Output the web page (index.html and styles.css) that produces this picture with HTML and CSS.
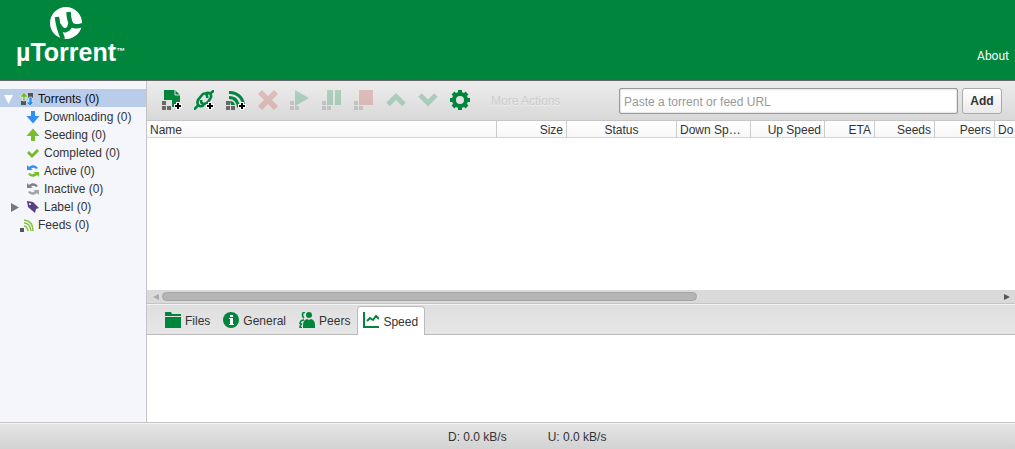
FILE: index.html
```html
<!DOCTYPE html>
<html lang="en">
<head>
<meta charset="utf-8">
<title>µTorrent</title>
<link rel="stylesheet" href="styles.css">
</head>
<body>
<svg class="defs" aria-hidden="true">
  <symbol id="grid" viewBox="0 0 9 9"><path d="M0 0h4v4H0zM0 5h4v4H0zM5 5h4v4H5z" fill="#686868"/></symbol>
  <symbol id="plus" viewBox="0 0 8 8"><path d="M2 0h4v2h2v4H6v2H2V6H0V2h2z" fill="#fff"/><path d="M3 1h2v2h2v2H5v2H3V5H1V3h2z" fill="#000"/></symbol>
  <symbol id="cycle" viewBox="0 0 14 14"><path class="cycle-top" d="M1 1l2 2c3-3 7-2 9 1l-2 1C8 3 6 4 5 5l2 1H1z"/><path class="cycle-bottom" d="M13 13l-2-2c-3 3-7 2-9-1l2-1c2 2 4 1 5 0L7 8h6z"/></symbol>
</svg>
<header class="banner">
  <div class="brand">
    <svg class="brand-mark" viewBox="0 0 32 32" aria-hidden="true">
      <circle cx="16" cy="16" r="16" fill="#fff"/>
      <path d="M7 10q1 10 6 22M9 18q3 6 7 5 5-2 4-7M18.500 5q1 14 6 14 3 1 8-1" fill="none" stroke="#00853d" stroke-width="4.500"/>
      <path d="M11 9l-2 0M13 9q0 7 3 11" fill="none" stroke="#fff" stroke-width="3"/>
    </svg>
    <div class="brand-name">µTorrent<span class="tm">™</span></div>
  </div>
  <a class="about" href="#about">About</a>
</header>
<div class="workspace">
  <nav class="sidebar" aria-label="Categories">
    <a class="item top selected" href="#torrents"><span class="arrow"><svg class="arrow-open" viewBox="0 0 9 9"><path d="M0 0h9L4.500 9z" fill="#fff"/></svg></span>
      <svg class="ico" viewBox="0 0 14 14"><path d="M8 1h5v5H8zM1 9h5v4H1z" fill="#555"/><path d="M4 0l4 5H5v4H3V5H0z" fill="#75b92a" stroke="#fff" stroke-width=".5"/><path d="M10 14L6 10h3V5h3v5h2z" fill="#278fee" stroke="#fff" stroke-width=".5"/></svg>
      <span>Torrents (0)</span></a>
    <a class="item" href="#downloading"><span class="arrow"></span><svg class="ico" viewBox="0 0 14 14"><path d="M5 1h4v5h4.500L7 13.500.5 6H5z" fill="#338ff0"/></svg><span>Downloading (0)</span></a>
    <a class="item" href="#seeding"><span class="arrow"></span><svg class="ico" viewBox="0 0 14 14"><path d="M5 13h4V8h4.500L7 .5.5 8H5z" fill="#78bd2b"/></svg><span>Seeding (0)</span></a>
    <a class="item" href="#completed"><span class="arrow"></span><svg class="ico" viewBox="0 0 14 14"><path d="M1 7l2-2 3 3 5-5 2 2-7 7z" fill="#75b92a"/></svg><span>Completed (0)</span></a>
    <a class="item" href="#active"><span class="arrow"></span><svg class="ico"><use href="#cycle"/></svg><span>Active (0)</span></a>
    <a class="item" href="#inactive"><span class="arrow"></span><svg class="ico inactive"><use href="#cycle"/></svg><span>Inactive (0)</span></a>
    <a class="item" href="#label"><span class="arrow"><svg class="arrow-closed" viewBox="0 0 9 9"><path d="M1 0v9l8-4.500z" fill="#777"/></svg></span><svg class="ico" viewBox="0 0 14 14"><path d="M1 1l6 1 6 6-3 1-1 4-7-6z" fill="#57407e"/><circle cx="4" cy="4" r="1" fill="#fff"/></svg><span>Label (0)</span></a>
    <a class="item top" href="#feeds"><span class="arrow"></span><svg class="ico" viewBox="0 0 14 14"><path d="M0 10h4v4H0z" fill="#555"/><path d="M4 8q3 0 4 5M4 5q6 0 7 8M4 2q9 1 9 11" fill="none" stroke="#82c341" stroke-width="1.500"/></svg><span>Feeds (0)</span></a>
  </nav>
  <main class="content">
    <div class="toolbar">
      <div class="tools">
        <button class="tool" aria-label="Add torrent"><svg viewBox="0 0 20 20"><path d="M2 0h11l5 5v12H2z" fill="#00853d"/><path d="M13 0v5h5" fill="none" stroke="#e2e2e2"/><path d="M0 10h10v10H0z" fill="#e2e2e2"/><use href="#grid" y="11" width="9" height="9"/><use href="#plus" x="12" y="12" width="8" height="8"/></svg></button>
        <button class="tool" aria-label="Add torrent from URL"><svg viewBox="0 0 20 20"><g fill="none" stroke="#00853d" stroke-width="2.600"><path d="M0 19.500l4-4M15 4.500l5-4M10 15c-4 3-8 0-6-5l4-5c2-3 6-1 5 3M7 10c0 5 4 5 7 2l2-3c3-4-1-8-5-5"/></g><use href="#plus" x="12" y="12" width="8" height="8"/></svg></button>
        <button class="tool" aria-label="Add RSS feed"><svg viewBox="0 0 20 20"><path d="M3 2.500C11 2 17 8 17.500 15M3 7.500c6 0 9 4 9.500 10" fill="none" stroke="#00853d" stroke-width="3"/><path d="M0 11h4v4H0zM0 16h4v4H0z" fill="#686868"/><path d="M5 16h4v4H5z" fill="#686868"/><path d="M4 11q4 0 5 4H5z" fill="#00853d"/><use href="#plus" x="12" y="12" width="8" height="8"/></svg></button>
        <button class="tool" aria-label="Remove" disabled><svg viewBox="0 0 20 20"><path d="M4 0l6 6 6-6 4 4-6 6 6 6-4 4-6-6-6 6-4-4 6-6-6-6z" fill="#c0392f"/></svg></button>
        <button class="tool" aria-label="Start" disabled><svg viewBox="0 0 20 20"><path d="M5 0l14 8-14 8z" fill="#00853d"/><use href="#grid" y="11" width="9" height="9"/></svg></button>
        <button class="tool" aria-label="Pause" disabled><svg viewBox="0 0 20 20"><path d="M5 0h6v15H5zM13 0h6v15h-6z" fill="#00853d"/><use href="#grid" y="11" width="9" height="9"/></svg></button>
        <button class="tool" aria-label="Stop" disabled><svg viewBox="0 0 20 20"><path d="M5 0h14v15H5z" fill="#c0392f"/><use href="#grid" y="11" width="9" height="9"/></svg></button>
        <button class="tool" aria-label="Move up" disabled><svg viewBox="0 0 20 20"><path d="M2 14.500l8-8 8 8" fill="none" stroke="#00853d" stroke-width="5"/></svg></button>
        <button class="tool" aria-label="Move down" disabled><svg viewBox="0 0 20 20"><path d="M2 5l8 8 8-8" fill="none" stroke="#00853d" stroke-width="5"/></svg></button>
        <button class="tool" aria-label="Preferences"><svg viewBox="0 0 20 20"><circle cx="10" cy="10" r="6" fill="none" stroke="#00853d" stroke-width="4"/><path d="M10 0v4M10 16v4M0 10h4M16 10h4M3 3l3 3M14 14l3 3M17 3l-3 3M6 14l-3 3" stroke="#00853d" stroke-width="4"/></svg></button>
        <button class="more" disabled>More Actions</button>
      </div>
      <form class="add-form">
        <input class="url" type="text" aria-label="Torrent or feed URL" placeholder="Paste a torrent or feed URL">
        <button class="add" type="button">Add</button>
      </form>
    </div>
    <div class="list">
      <table class="torrents">
        <colgroup><col class="w-name"><col class="w-size"><col class="w-status"><col class="w-rate"><col class="w-rate"><col class="w-eta"><col class="w-count"><col class="w-count"><col class="w-rate"></colgroup>
        <thead><tr><th>Name</th><th class="num">Size</th><th class="mid">Status</th><th class="num">Down Speed</th><th class="num">Up Speed</th><th class="num">ETA</th><th class="num">Seeds</th><th class="num">Peers</th><th>Do</th></tr></thead>
      </table>
    </div>
    <div class="scroll"><span class="scroll-left"></span><div class="track"><div class="thumb"></div></div><span class="scroll-right"></span></div>
    <div class="tabs" role="tablist">
      <button class="tab" role="tab"><svg viewBox="0 0 16 16"><path d="M0 0h6l1 2h9v2H0zM0 5h16v11H0z" fill="#00853d"/></svg>Files</button>
      <button class="tab" role="tab"><svg viewBox="0 0 16 16"><circle cx="8" cy="8" r="8" fill="#00853d"/><path d="M7 3h3v2H7zM6 6h4v6h1v1H6v-1h1V7H6z" fill="#fff"/></svg>General</button>
      <button class="tab" role="tab"><svg viewBox="0 0 16 16"><circle cx="10" cy="3" r="3" fill="#00853d"/><path d="M4 16v-3q0-5 4-6l2 1 2-1q4 1 4 6v3z" fill="#00853d"/><path d="M6 .5Q3.500 0 3.500 3q0 2 1.500 3M5 8Q1 8 1 12M3 11.500q-2 1-2 4h2" fill="none" stroke="#00853d" stroke-width="1.600"/></svg>Peers</button>
      <button class="tab current" role="tab" aria-selected="true"><svg viewBox="0 0 16 16"><path d="M1 0v15h15" fill="none" stroke="#00853d" stroke-width="2"/><path d="M4 9l3-3 3 2 3-4 3 3" fill="none" stroke="#00853d" stroke-width="2"/></svg>Speed</button>
    </div>
    <section class="panel"></section>
  </main>
</div>
<footer class="status"><span>D: 0.0 kB/s</span><span>U: 0.0 kB/s</span></footer>
</body>
</html>
```
FILE: styles.css
```css
* { box-sizing: border-box; }
body {
  margin: 0;
  min-height: 100vh;
  display: flex;
  flex-direction: column;
  font: 12px/18px "Liberation Sans", Arial, sans-serif;
  color: #333;
  background: #fff;
}
button, input { font: inherit; color: inherit; }
button { border: 0; padding: 0; background: none; }
svg { display: block; flex: none; }
.defs { position: absolute; width: 0; height: 0; }

.banner {
  display: flex;
  justify-content: space-between;
  align-items: flex-end;
  height: 81px;
  padding: 0 6px 14px 16px;
  background: #00853d;
  border-bottom: 1px solid #666;
}
.brand { display: flex; flex-direction: column; }
.brand-mark { width: 32px; height: 32px; margin-left: 34px; }
.brand-name {
  display: flex;
  align-items: center;
  color: #fff;
  font-size: 25px;
  font-weight: bold;
  line-height: 27px;
}
.tm { font-size: 9px; line-height: 18px; padding-bottom: 4px; }
.about {
  color: #fff;
  font: 12px/20px Roboto, sans-serif;
  text-decoration: none;
}

.workspace { display: flex; flex: 1; }
.sidebar {
  width: 147px;
  flex: none;
  padding-top: 8px;
  background: #f4f6fb;
  border-right: 1px solid #c4c4c8;
}
.item {
  display: flex;
  align-items: center;
  height: 18px;
  gap: 4px;
  padding: 2px 0 0 10px;
  color: #333;
  text-decoration: none;
  white-space: nowrap;
}
.item.top { padding-left: 4px; }
.item.selected { background: #b9cce9; color: #111; }
.ico { width: 14px; height: 14px; }
.arrow { width: 12px; flex: none; }
.arrow-open, .arrow-closed { width: 9px; height: 9px; }
.cycle-top { fill: #338ff0; }
.cycle-bottom { fill: #78bd2b; }
.inactive { filter: grayscale(1); }

.content { flex: 1; min-width: 0; display: flex; flex-direction: column; }
.toolbar {
  display: flex;
  justify-content: space-between;
  align-items: center;
  height: 40px;
  padding: 0 13px 0 15px;
  background: linear-gradient(#ececec, #d9d9d9);
  border-bottom: 1px solid #c6c6c6;
}
.tools { display: flex; gap: 12px; align-items: center; padding-bottom: 2px; }
.tool svg { width: 20px; height: 20px; }
.tool:disabled { opacity: .24; }
.more { margin: 2px 0 0 9px; color: #ccc; text-shadow: 0 1px #eee; }
.add-form { display: flex; gap: 4px; }
.url {
  width: 339px;
  height: 26px;
  padding: 2px 4px 0;
  border: 1px solid #999;
  border-radius: 2px;
  background: #fff;
  box-shadow: inset 0 0 2px #aaa;
}
.url::placeholder { color: #999; opacity: 1; }
.add {
  width: 40px;
  height: 26px;
  border: 1px solid #aaa;
  border-radius: 3px;
  background: linear-gradient(#fff, #eaeaea);
  font-weight: bold;
}

.list { flex: 1; overflow: hidden; }
.torrents { width: 922px; table-layout: fixed; border-collapse: separate; border-spacing: 0; }
.w-name { width: 350px; }
.w-size { width: 70px; }
.w-status { width: 110px; }
.w-rate { width: 74px; }
.w-eta { width: 50px; }
.w-count { width: 60px; }
.torrents th {
  height: 17px;
  padding: 2px 3px 0;
  border-right: 1px solid #ccc;
  border-bottom: 1px solid #d6d6d6;
  background: linear-gradient(#fff, #f7f7f7);
  font-weight: normal;
  line-height: 14px;
  text-align: left;
  white-space: nowrap;
  overflow: hidden;
  text-overflow: ellipsis;
}
.torrents .num { text-align: right; }
.torrents .mid { text-align: center; }

.scroll {
  display: flex;
  align-items: center;
  height: 13px;
  padding: 0 5px 0 6px;
  background: #dadada;
}
.track { flex: 1; padding: 0 6px 0 3px; }
.thumb {
  width: 64%;
  height: 9px;
  border: 1px solid #a4a4a4;
  border-radius: 5px;
  background: #b5b5b5;
}
.scroll-left, .scroll-right { border: 3px solid transparent; }
.scroll-left { border-left: 0; border-right: 6px solid #aaa; }
.scroll-right { border-right: 0; border-left: 6px solid #555; }

.tabs {
  display: flex;
  align-items: flex-end;
  gap: 1px;
  height: 32px;
  padding-left: 12px;
  background: linear-gradient(#dfdfdf, #e6e6e6);
  border-top: 1px solid #c4c4c4;
  border-bottom: 1px solid #bbb;
  box-shadow: inset 0 1px #f4f4f4;
}
.tab {
  display: flex;
  align-items: center;
  gap: 4px;
  height: 28px;
  padding: 2px 6px 0;
  line-height: 26px;
}
.tab svg { width: 16px; height: 16px; margin-bottom: 3px; }
.tab.current {
  height: 29px;
  margin-bottom: -1px;
  padding: 1px 6px 0 5px;
  border: 1px solid #bbb;
  border-bottom: 0;
  border-radius: 4px 4px 0 0;
  background: #fff;
}
.panel { height: 87px; background: #fff; }

.status {
  display: flex;
  gap: 41px;
  height: 27px;
  padding-left: 448px;
  line-height: 28px;
  background: linear-gradient(#e6e6e6, #d2d2d2);
  border-top: 1px solid #c4c4c4;
  box-shadow: inset 0 1px #f4f4f4;
}
```
